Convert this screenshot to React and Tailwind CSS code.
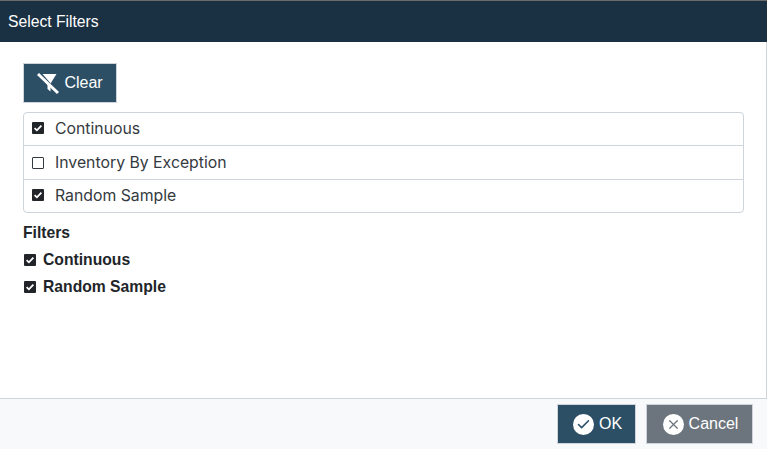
import { Check, X } from 'lucide-react';

const ITEMS = [
  { label: 'Continuous', checked: true },
  { label: 'Inventory By Exception', checked: false },
  { label: 'Random Sample', checked: true },
];

function Box({ checked, className = '' }) {
  if (!checked) {
    return <span className={`block w-[12px] h-[12px] rounded-[1px] border-[1.5px] border-[#343a40] bg-white ${className}`} />;
  }
  return (
    <span className={`flex items-center justify-center w-[12px] h-[12px] rounded-[1px] bg-[#212529] ${className}`}>
      <svg width="12" height="12" viewBox="0 0 12 12" fill="none">
        <path d="M2.6 6.1 L4.9 8.3 L9.4 3.6" stroke="#fff" strokeWidth="1.8" />
      </svg>
    </span>
  );
}

function FilterOffIcon() {
  return (
    <svg width="24" height="24" viewBox="0 0 24 24" fill="none">
      <path d="M5.5 3 H19.5 L14.5 11 L13.8 12.5 Z" fill="#fff" />
      <path d="M5.5 7.5 L13.5 16 V20.5 L10.5 18 V14 Z" fill="#fff" />
      <path d="M1 3 L21 22" stroke="#fff" strokeWidth="3" />
    </svg>
  );
}

export default function App() {
  return (
    <div className="w-[767px] h-[449px] flex flex-col bg-white overflow-hidden font-['Liberation_Sans',sans-serif] border-t border-[#6b6b6b]">
      <div className="h-[41px] shrink-0 flex items-center px-2 bg-[#1a3143] text-white text-[15.7px]">
        Select Filters
      </div>

      <div className="flex-1 px-[23px] pt-[21px] border-r border-[#ced4da]">
        <button className="flex items-center justify-center gap-[3px] w-[94px] h-10 bg-[#2c4f66] border border-[#ced4da] text-white text-base">
          <FilterOffIcon />
          Clear
        </button>

        <div className="mt-[9px] w-[721px] rounded-[4px] border border-[#ced4da] font-['Inter',sans-serif] text-[15.8px] text-[#343a40]">
          {ITEMS.map((item, i) => (
            <div
              key={item.label}
              className={`flex items-center gap-[11px] pl-2 ${i === 1 ? 'h-[35px] border-y border-[#ced4da]' : 'h-[32px]'}`}
            >
              <Box checked={item.checked} className={item.checked ? 'mb-[2px]' : ''} />
              {item.label}
            </div>
          ))}
        </div>

        <div className="mt-[10px] font-bold text-[15.7px] leading-5 text-[#212529]">Filters</div>
        <div className="mt-[3px] font-bold text-[15.7px] text-[#212529]">
          <div className="flex items-center gap-[7px] h-[27px] pl-px">
            <Box checked />
            Continuous
          </div>
          <div className="flex items-center gap-[7px] h-[27px] pl-px">
            <Box checked />
            Random Sample
          </div>
        </div>
      </div>

      <div className="h-[51px] shrink-0 flex justify-end items-start gap-[10px] pt-[5px] pr-[14px] bg-[#f8f9fa] border-t border-[#ced4da]">
        <button className="flex items-center justify-center gap-[5px] w-[79px] h-[40px] pl-[2px] bg-[#2c4f66] border border-[#ced4da] text-white text-base">
          <span className="flex items-center justify-center w-[21px] h-[21px] rounded-full bg-white">
            <Check size={15} strokeWidth={2.5} color="#2c4f66" />
          </span>
          OK
        </button>
        <button className="flex items-center justify-center gap-[5px] w-[107px] h-[40px] pl-[2px] bg-[#6c757d] border border-[#ced4da] text-white text-base">
          <span className="flex items-center justify-center w-[21px] h-[21px] rounded-full bg-white">
            <X size={15} strokeWidth={2} color="#6c757d" />
          </span>
          Cancel
        </button>
      </div>
    </div>
  );
}
